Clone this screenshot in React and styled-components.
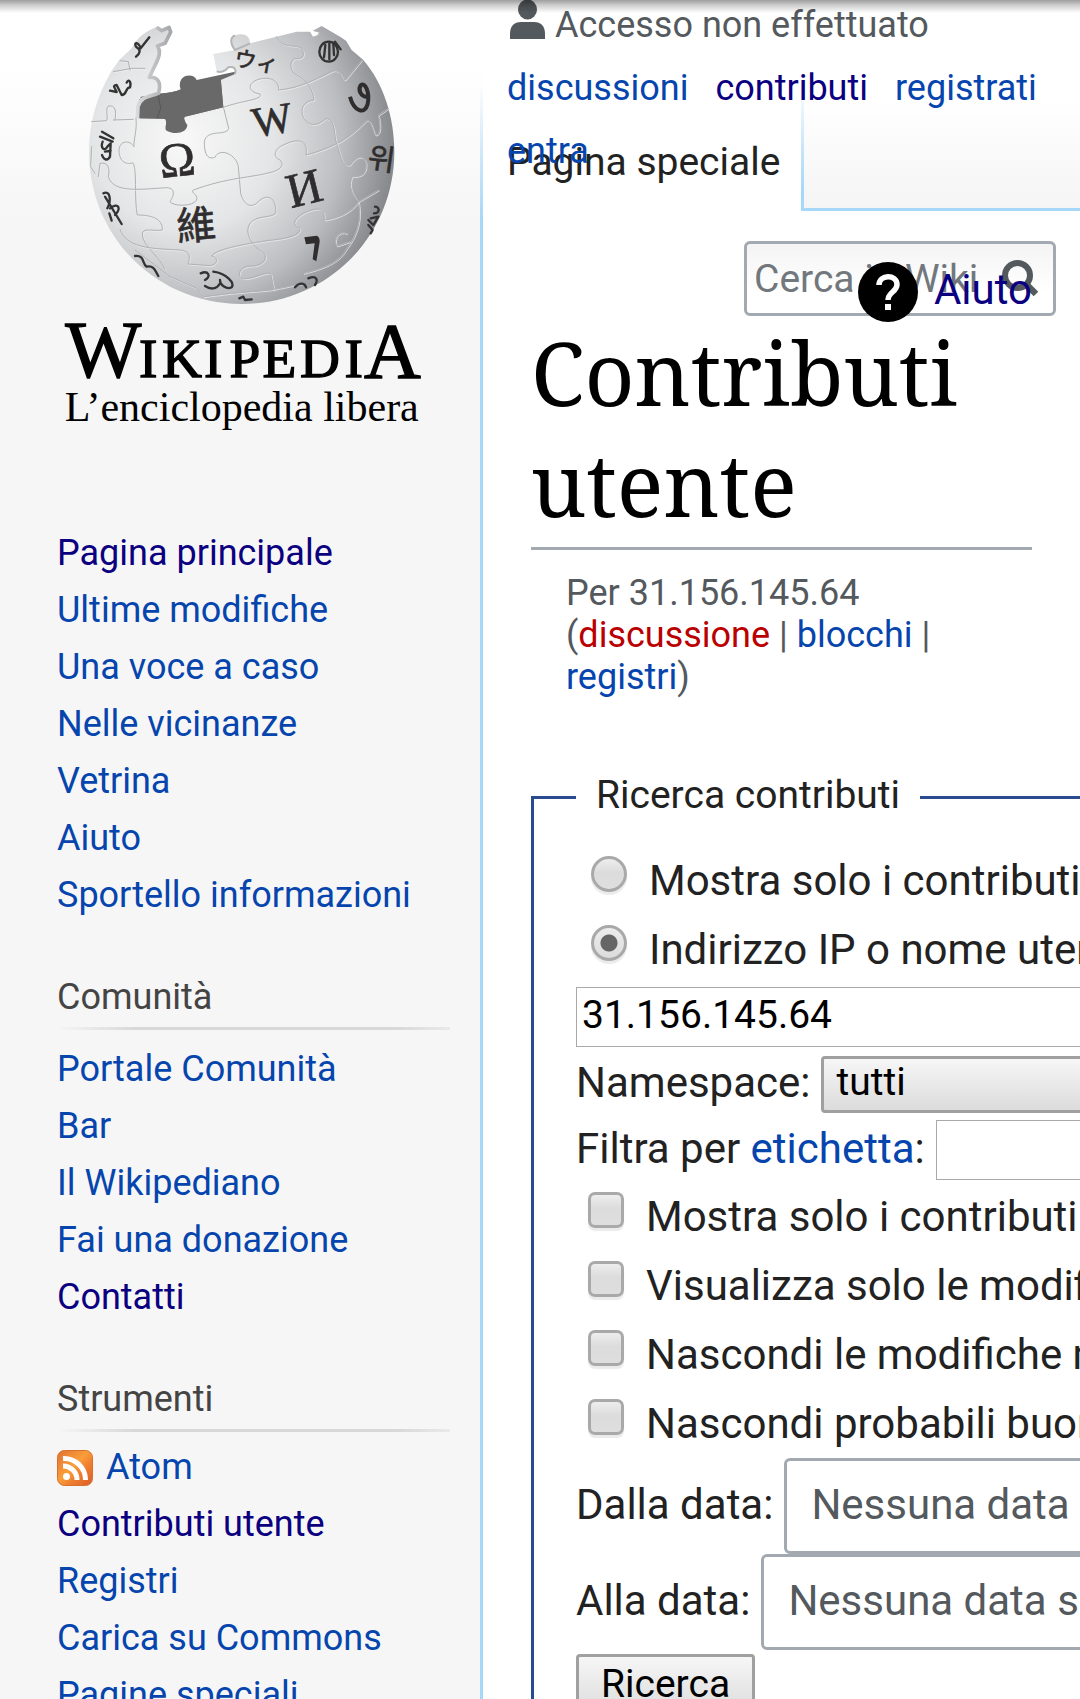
import React from 'react';
import styled, { createGlobalStyle } from 'styled-components';

const sans = "Roboto, 'Liberation Sans', sans-serif";
const serif = "'Noto Serif', 'DejaVu Serif Condensed', 'DejaVu Serif', serif";
const logoSerif = "'Liberation Serif', 'Noto Sans CJK TC', serif";

const Global = createGlobalStyle`
  * { box-sizing: border-box; }
  body { margin: 0; background: #fff; font-family: ${sans}; color: #222; }
  ul { list-style: none; margin: 0; padding: 0; }
`;

const Page = styled.div`
  position: relative;
  display: grid;
  grid-template-columns: 480px minmax(0, 1fr);
  height: 100vh;
  overflow: hidden;
  background: linear-gradient(#fff 60px, #f6f6f6 220px);
`;

const TopShadow = styled.div`
  position: absolute;
  top: 0;
  left: 0;
  right: 0;
  height: 13px;
  background: linear-gradient(rgba(0, 0, 0, 0.38), rgba(0, 0, 0, 0.2) 5px, rgba(0, 0, 0, 0));
  pointer-events: none;
`;

const Link = styled.a`
  color: ${(p) => (p.$missing ? '#ba0000' : p.$visited ? '#0b0080' : '#0645ad')};
  text-decoration: none;
`;

/* Sidebar */
const Sidebar = styled.aside`
  min-width: 0;
`;

const LogoLink = styled.a`
  display: block;
  height: 440px;
  padding-left: 50px;
`;

const Portal = styled.nav`
  padding: 0 30px 45px 57px;
  font-size: 36px;
  line-height: 57px;
  &:first-of-type { padding-top: 85px; }
`;

const PortalTitle = styled.h3`
  margin: 0 0 ${(p) => (p.$tight ? 7 : 11)}px;
  padding-bottom: 1px;
  font-size: 36px;
  font-weight: 400;
  color: #444;
  border-bottom: 3px solid;
  border-image: linear-gradient(to right, #f6f6f6, #d8d8d8 20%, #d8d8d8 86%, #eaeaea) 1;
`;

const IconItem = styled.li`
  display: flex;
  align-items: center;
  gap: 13px;
`;

/* Header */
const Main = styled.main`
  min-width: 0;
  border-left: 3px solid;
  border-image: linear-gradient(rgba(167, 215, 249, 0) 85px, #a7d7f9 220px) 1;
`;

const Head = styled.header`
  position: relative;
  display: flex;
  height: 211px;
  background: #fff;
`;

const Personal = styled.ul`
  position: absolute;
  top: -6px;
  left: 24px;
  right: 24px;
  display: flex;
  flex-wrap: wrap;
  column-gap: 27px;
  font-size: 36px;
  line-height: 63px;
`;

const Anonymous = styled.li`
  display: flex;
  align-items: center;
  gap: 10px;
  padding-left: 3px;
  color: #54595d;
  svg { margin-top: -13px; }
`;

const Tab = styled.div`
  padding: 134px 21px 0 24px;
  font-size: 39px;
  line-height: 57px;
`;

const TabSpace = styled.div`
  flex: 1;
  margin-top: 85px;
  border-style: solid;
  border-width: 0 0 3px 3px;
  border-image: linear-gradient(rgba(167, 215, 249, 0), #a7d7f9 85%) 1;
  background: linear-gradient(#fff 10px, #f5f5f5);
`;

const Body = styled.div`
  padding: 30px 0 0 48px;
  background: #fff;
`;

const SearchForm = styled.form`
  display: flex;
  align-items: center;
  width: 312px;
  height: 75px;
  margin: 0 24px 0 auto;
  padding: 0 15px 0 7px;
  border: 3px solid #a2a9b1;
  border-radius: 6px;
  background: linear-gradient(#f4f4f4, #fff 70%);
`;

const SearchInput = styled.input`
  width: 226px;
  padding: 0;
  border: 0;
  background: transparent;
  font: 39px ${sans};
  &::placeholder { color: #72777d; opacity: 1; }
`;

const SearchButton = styled.button`
  display: flex;
  margin-left: auto;
  padding: 0;
  border: 0;
  background: none;
`;

const Content = styled.div`
  position: relative;
  padding: 1px 48px 0 0;
`;

const Help = styled.a`
  position: absolute;
  top: -54px;
  right: 48px;
  display: flex;
  align-items: flex-start;
  gap: 16px;
  font-size: 42px;
  line-height: 56px;
  color: #0b0080;
  text-decoration: none;
`;

const Title = styled.h1`
  margin: 0;
  padding-bottom: 8px;
  border-bottom: 3px solid #a2a9b1;
  font-family: ${serif};
  font-size: 87px;
  line-height: 111px;
  font-weight: 400;
  color: #000;
`;

const SubTitle = styled.div`
  padding: 22px 35px 0;
  font-size: 36px;
  line-height: 42px;
  color: #54595d;
`;

/* Search form */
const Fields = styled.fieldset`
  width: 800px;
  margin: 73px 0 0;
  padding: 23px 42px 40px;
  border: 3px solid #2a4b8d;
`;

const Legend = styled.legend`
  padding: 0 20px 4px;
  font-size: 39px;
  line-height: 48px;
`;

const Option = styled.div`
  display: flex;
  align-items: flex-start;
  gap: 22px;
  padding-left: ${(p) => (p.$radio ? 15 : 12)}px;
  font-size: 42px;
  line-height: 69px;
  white-space: nowrap;
`;

const Toggle = styled.input`
  appearance: none;
  flex: none;
  width: 36px;
  height: 36px;
  margin: 10px 0 0;
  border: 3px solid #a9a9a9;
  border-radius: ${(p) => (p.type === 'radio' ? '50%' : '7px')};
  background: linear-gradient(#ededed, #dcdcdc 45%, #dedede);
  box-shadow: 0 3px 1px #ebebeb;
  &:checked {
    background: radial-gradient(circle, #666 0 8px, transparent 9px),
      linear-gradient(#ededed, #dcdcdc);
  }
`;

const Row = styled.div`
  display: flex;
  align-items: center;
  gap: 11px;
  height: ${(p) => p.$height}px;
  font-size: 42px;
  white-space: nowrap;
  label { padding-bottom: 4px; }
`;

const TextInput = styled.input`
  flex: 1;
  min-width: 0;
  height: 60px;
  padding: 0 5px 4px;
  border: 1px solid #a9a9a9;
  background: #fff;
  font: 39px ${sans};
  color: #000;
`;

const Select = styled.select`
  appearance: none;
  flex: 1;
  height: 57px;
  padding: 0 12px 6px;
  border: 3px solid #a0a0a0;
  border-radius: 4px;
  background: linear-gradient(#f6f6f6, #dcdcdc);
  font: 39px ${sans};
  color: #000;
`;

const DateInput = styled.input`
  flex: 1;
  min-width: 0;
  height: 96px;
  padding: 0 24px 4px;
  border: 3px solid #a2a9b1;
  border-radius: 6px;
  background: #fff;
  font: 42px ${sans};
  &::placeholder { color: #54595d; opacity: 1; }
`;

const Submit = styled.button`
  display: block;
  margin-top: 4px;
  padding: 4px 22px 6px;
  border: 3px solid #a0a0a0;
  border-radius: 4px;
  background: linear-gradient(#f6f6f6, #dcdcdc);
  font: 39px ${sans};
  color: #000;
`;

const seams = [
  'M258 355C262 390 250 420 252 440C240 420 210 420 207 450C207 490 235 495 248 488C262 500 252 600 262 645C290 645 340 650 337 690C310 695 275 680 277 705C280 740 330 770 345 808',
  'M520 320L536 385C530 410 470 385 463 425C462 480 485 475 495 472C510 440 560 465 565 500L572 580C580 610 600 630 625 605C650 580 680 590 677 640C660 655 620 645 600 670C580 700 610 740 635 755C660 770 640 800 600 798C565 800 560 830 580 836C610 838 640 815 662 820L672 870',
  'M145 530L150 490C175 485 180 505 175 530C190 580 270 568 350 563C380 565 370 590 360 605C370 620 430 620 440 600C445 580 420 580 430 570C540 530 600 535 670 515C700 505 700 490 690 480C665 470 675 445 700 435C740 415 775 415 768 465C860 440 900 410 945 365C960 350 965 380 975 405C995 405 990 370 985 345L1015 325',
  'M190 360L250 358M125 365L170 362C175 350 165 330 175 318C195 315 200 330 195 360',
  'M520 322C580 300 640 300 630 282C590 275 595 250 620 240C660 225 690 245 685 270C750 265 800 235 850 212C880 210 870 240 885 240L935 180',
  'M680 110C700 150 730 130 755 145C770 170 750 180 735 175C715 185 720 215 740 225C770 240 790 270 792 300C750 305 750 340 765 360C790 385 810 370 828 355C860 360 850 410 860 430C870 460 875 500 900 495C915 470 940 460 948 490C950 525 930 530 905 530C895 560 905 580 925 605C935 650 925 700 890 745C870 780 840 800 760 820',
  'M210 688C230 745 300 745 390 750C430 755 415 780 415 792L480 797C510 790 500 770 485 768C500 745 600 730 650 722C720 715 750 705 750 685C720 675 735 650 770 635C810 620 825 625 822 660C860 655 900 640 925 605L985 570',
  'M255 750L360 830L440 865L460 890L540 880L660 870L760 850M890 700C860 690 850 720 860 738L900 725',
  'M190 215L245 205L285 205M210 182L235 185L240 210M125 440L122 500L135 520',
];

const glyphs = [
  ['Ω', 386, 528, 146, -6],
  ['W', 674, 402, 128, -10],
  ['И', 774, 612, 146, -14],
  ['維', 442, 718, 118, -5],
  ['ウィ', 615, 208, 66, 10],
  ['위', 990, 508, 88, 8],
];

const wordmark = [
  ['I', 295],
  ['K', 396],
  ['I', 490],
  ['P', 585],
  ['E', 688],
  ['D', 810],
  ['I', 911],
];

function Globe() {
  return (
    <svg width="400" height="440" viewBox="0 0 1200 1320" role="img" aria-label="Wikipedia">
      <defs>
        <radialGradient id="ball" gradientUnits="userSpaceOnUse" cx="400" cy="420" r="680">
          <stop offset="0" stopColor="#f8f8f8" />
          <stop offset="0.4" stopColor="#e4e5e6" />
          <stop offset="0.7" stopColor="#bcbdc0" />
          <stop offset="1" stopColor="#77797d" />
        </radialGradient>
        <linearGradient id="rim" x1="0" x2="1">
          <stop offset="0" stopColor="#d9dadb" />
          <stop offset="1" stopColor="#a5a7aa" />
        </linearGradient>
      </defs>
      <path
        d="M262 300C300 275 360 285 395 268C375 225 430 215 440 240L555 215L560 232L520 240L530 325L400 352C430 400 350 415 345 372L348 355L255 357Z"
        fill="#696969"
      />
      <path
        d="M183 215L208 180L245 145C265 105 290 95 320 80L335 92L357 82L362 96L345 130L322 138C335 155 325 175 318 190L298 232C325 230 335 250 325 280C300 290 270 290 268 320L268 355L345 357C355 370 340 385 350 392C375 405 410 400 412 375C405 365 400 355 405 350L520 322L512 240L555 222C560 205 550 198 535 202C525 215 510 218 500 214L490 162L555 150C540 130 540 112 555 106C580 98 600 105 600 130L740 95L780 95L790 112C800 112 810 105 808 98L788 92L815 78L870 110L888 122L905 150L940 180C1000 250 1033 350 1033 455C1033 710 830 912 575 912C320 912 117 710 117 455C117 370 140 290 183 215Z"
        fill="url(#ball)"
      />
      <path
        d="M268 298C300 278 360 285 392 268C378 232 425 215 440 242L512 232L520 322L405 350C400 355 405 365 412 375C410 400 375 405 350 392C340 385 355 370 345 357L268 355Z"
        fill="#696969"
      />
      <path d="M272 292L325 285L332 325L322 355" fill="none" stroke="#555" strokeWidth="3" />
      <path
        d="M320 82L335 92L357 82L362 96L345 130L322 138C335 155 325 175 318 190L298 232C325 230 335 250 325 280C300 290 270 290 264 320L262 355"
        fill="none"
        stroke="url(#rim)"
        strokeWidth="11"
        strokeLinejoin="round"
      />
      <path d="M555 222C560 205 550 198 535 202C525 215 510 218 500 214M600 130L555 150C540 130 540 112 555 106M790 112C800 112 810 105 808 98" fill="none" stroke="#b4b5b7" strokeWidth="6" />
      <g fill="none" strokeLinecap="round" strokeLinejoin="round">
        {seams.map((d) => (
          <g key={d}>
            <path d={d} stroke="#f0f0f0" strokeWidth="3" strokeOpacity="0.7" transform="translate(3 3)" />
            <path d={d} stroke="#b0b1b3" strokeWidth="3" />
          </g>
        ))}
      </g>
      <g fill="#2f2d2e" stroke="#2f2d2e" strokeWidth="2" fontFamily={logoSerif} textAnchor="middle">
        {glyphs.map(([ch, x, y, size, turn]) => (
          <text key={ch} x={x} y={y} fontSize={size} transform={`rotate(${turn} ${x} ${y})`}>
            {ch}
          </text>
        ))}
      </g>
      <path d="M763 712L800 707Q812 712 808 732L799 784L788 778L794 730L768 733Z" fill="#2f2d2e" />
      <path d="M900 290C912 335 945 345 953 312C960 275 945 245 932 256C922 272 935 292 953 290" fill="none" stroke="#2f2d2e" strokeWidth="12" />
      <g fill="none" stroke="#333" strokeWidth="7" strokeLinecap="round" strokeLinejoin="round">
        <path d="M298 112L272 145C265 125 250 125 258 140C275 150 270 160 258 170" />
        <path d="M180 272L200 276C195 262 185 258 200 255L215 285C232 285 225 262 240 262C245 245 235 235 230 248" />
        <path d="M156 395L190 415M150 410L188 425M158 425C150 445 165 455 172 440L182 430L180 470C172 485 160 478 156 465M165 455L182 452" />
        <ellipse cx="836" cy="155" rx="28" ry="30" />
        <path d="M826 135L822 172M838 130L838 178M850 132L852 165M855 125L872 148" />
        <path d="M160 580C180 570 185 600 172 625M165 590L215 672M180 625C205 605 215 625 195 645M178 640L185 662" />
        <path d="M255 768C285 765 275 790 290 800C310 795 315 810 325 828" />
        <path d="M452 820C475 810 485 830 465 840M490 815C530 820 555 850 545 862C530 870 510 855 510 840M510 850C500 870 480 868 465 858" />
        <path d="M735 862C750 845 765 850 768 862M775 835C800 825 805 840 795 855" />
        <path d="M975 620C990 620 990 640 972 640M962 655L985 650L970 675L955 660M955 675L968 690L962 700" />
        <path d="M568 895L580 890L585 900L605 898" />
      </g>
      <g fontFamily={logoSerif} fill="#000" stroke="#000" strokeWidth="4" textAnchor="middle">
        <text x="160" y="1132" fontSize="242">W</text>
        {wordmark.map(([ch, x]) => (
          <text key={x} x={x} y="1132" fontSize="166">{ch}</text>
        ))}
        <text x="1027" y="1132" fontSize="236">A</text>
      </g>
      <text x="44" y="1264" fontSize="126" fontFamily={logoSerif} fill="#000">
        L’enciclopedia libera
      </text>
    </svg>
  );
}

function UserIcon() {
  return (
    <svg width="35" height="39" viewBox="0 0 35 39" fill="#54595d" aria-hidden="true">
      <ellipse cx="17.5" cy="9.5" rx="9.5" ry="10" />
      <path d="M0 39V34C0 26 4 22 11 22H24C31 22 35 26 35 34V39Z" />
    </svg>
  );
}

function SearchIcon() {
  return (
    <svg width="36" height="37" viewBox="0 0 36 37" fill="none" stroke="#54595d" aria-hidden="true">
      <circle cx="15.5" cy="15.5" r="12.5" strokeWidth="6" />
      <path d="M24 24L34 34" strokeWidth="6.5" />
    </svg>
  );
}

function HelpIcon() {
  return (
    <svg width="60" height="60" viewBox="0 0 60 60" aria-hidden="true">
      <circle cx="30" cy="30" r="30" />
      <path d="M21 23C21 12 39 12 39 22.500C39 30 30 30 30 38" fill="none" stroke="#fff" strokeWidth="5.500" />
      <rect x="27" y="42" width="6" height="6" fill="#fff" />
    </svg>
  );
}

function FeedIcon() {
  return (
    <svg width="36" height="36" viewBox="0 0 36 36" aria-hidden="true">
      <defs>
        <linearGradient id="feed" x1="0" y1="0" x2="1" y2="1">
          <stop offset="0" stopColor="#e07030" />
          <stop offset="0.45" stopColor="#fb9e3a" />
          <stop offset="0.65" stopColor="#ee7f2f" />
          <stop offset="1" stopColor="#d95b29" />
        </linearGradient>
      </defs>
      <rect x="0.5" y="0.5" width="35" height="35" rx="7" fill="url(#feed)" stroke="#d8702c" />
      <circle cx="9.500" cy="26.500" r="3.500" fill="#fff" />
      <path d="M6 16A14 14 0 0 1 20 30M6 8.500A21.500 21.500 0 0 1 28.500 30" fill="none" stroke="#fff" strokeWidth="5" />
    </svg>
  );
}

const navigation = [
  ['Pagina principale', true],
  ['Ultime modifiche'],
  ['Una voce a caso'],
  ['Nelle vicinanze'],
  ['Vetrina'],
  ['Aiuto'],
  ['Sportello informazioni'],
];
const community = [
  ['Portale Comunità'],
  ['Bar'],
  ['Il Wikipediano'],
  ['Fai una donazione'],
  ['Contatti', true],
];
const tools = [['Contributi utente', true], ['Registri'], ['Carica su Commons'], ['Pagine speciali']];

const filters = [
  'Mostra solo i contributi che sono ultime revisioni',
  'Visualizza solo le modifiche che sono creazioni di pagina',
  'Nascondi le modifiche minori',
  'Nascondi probabili buone modifiche',
];

function Items({ items }) {
  return items.map(([label, visited]) => (
    <li key={label}>
      <Link href="#" $visited={visited}>{label}</Link>
    </li>
  ));
}

export default function App() {
  return (
    <Page>
      <Global />
      <Sidebar>
        <LogoLink href="#"><Globe /></LogoLink>
        <Portal aria-label="Navigazione">
          <ul><Items items={navigation} /></ul>
        </Portal>
        <Portal>
          <PortalTitle>Comunità</PortalTitle>
          <ul><Items items={community} /></ul>
        </Portal>
        <Portal>
          <PortalTitle $tight>Strumenti</PortalTitle>
          <ul>
            <IconItem><FeedIcon /><Link href="#">Atom</Link></IconItem>
            <Items items={tools} />
          </ul>
        </Portal>
      </Sidebar>

      <Main>
        <Head>
          <Tab>Pagina speciale</Tab>
          <TabSpace />
          <Personal>
            <Anonymous><UserIcon />Accesso non effettuato</Anonymous>
            <Items items={[['discussioni'], ['contributi', true], ['registrati'], ['entra']]} />
          </Personal>
        </Head>
        <Body>
          <SearchForm>
            <SearchInput type="text" placeholder="Cerca in Wikipedia" aria-label="Cerca in Wikipedia" />
            <SearchButton type="button" aria-label="Cerca"><SearchIcon /></SearchButton>
          </SearchForm>
          <Content>
            <Help href="#"><HelpIcon />Aiuto</Help>
            <Title>Contributi utente</Title>
            <SubTitle>
              Per 31.156.145.64 (<Link href="#" $missing>discussione</Link> | <Link href="#">blocchi</Link> | <Link href="#">registri</Link>)
            </SubTitle>
            <form>
              <Fields>
                <Legend>Ricerca contributi</Legend>
                <Option $radio>
                  <Toggle type="radio" name="who" id="newbie" />
                  <label htmlFor="newbie">Mostra solo i contributi dei nuovi utenti</label>
                </Option>
                <Option $radio>
                  <Toggle type="radio" name="who" id="user" defaultChecked />
                  <label htmlFor="user">Indirizzo IP o nome utente:</label>
                </Option>
                <Row $height={66}>
                  <TextInput aria-label="Indirizzo IP o nome utente" defaultValue="31.156.145.64" />
                </Row>
                <Row $height={68}>
                  <label htmlFor="namespace">Namespace:</label>
                  <Select id="namespace"><option>tutti</option></Select>
                </Row>
                <Row $height={64}>
                  <label htmlFor="tag">Filtra per <Link href="#">etichetta</Link>:</label>
                  <TextInput id="tag" />
                </Row>
                {filters.map((text, i) => (
                  <Option key={text}>
                    <Toggle type="checkbox" id={`filter${i}`} />
                    <label htmlFor={`filter${i}`}>{text}</label>
                  </Option>
                ))}
                <Row $height={96}>
                  <label htmlFor="from">Dalla data:</label>
                  <DateInput id="from" placeholder="Nessuna data selezionata" />
                </Row>
                <Row $height={96}>
                  <label htmlFor="to">Alla data:</label>
                  <DateInput id="to" placeholder="Nessuna data selezionata" />
                </Row>
                <Submit type="button">Ricerca</Submit>
              </Fields>
            </form>
          </Content>
        </Body>
      </Main>
      <TopShadow />
    </Page>
  );
}
